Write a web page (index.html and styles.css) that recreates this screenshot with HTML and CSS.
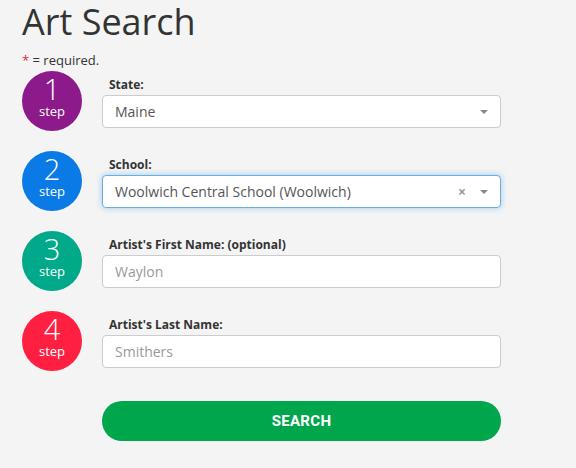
FILE: index.html
```html
<!DOCTYPE html>
<html lang="en">
<head>
<meta charset="utf-8">
<title>Art Search</title>
<link rel="stylesheet" href="styles.css">
</head>
<body>
<main class="page">
  <h1 class="title">Art Search</h1>
  <p class="note"><span class="req">*</span> = required.</p>
  <form class="steps">
    <div class="step-row">
      <div class="badge badge-1"><span class="num">1</span><span class="word">step</span></div>
      <div class="field">
        <label class="label">State:</label>
        <div class="select">
          <span class="value">Maine</span>
          <span class="arrow"></span>
        </div>
      </div>
    </div>
    <div class="step-row">
      <div class="badge badge-2"><span class="num">2</span><span class="word">step</span></div>
      <div class="field">
        <label class="label">School:</label>
        <div class="select focused">
          <span class="value">Woolwich Central School (Woolwich)</span>
          <span class="clear">×</span>
          <span class="arrow"></span>
        </div>
      </div>
    </div>
    <div class="step-row">
      <div class="badge badge-3"><span class="num">3</span><span class="word">step</span></div>
      <div class="field">
        <label class="label">Artist's First Name: (optional)</label>
        <input class="input" type="text" placeholder="Waylon">
      </div>
    </div>
    <div class="step-row">
      <div class="badge badge-4"><span class="num">4</span><span class="word">step</span></div>
      <div class="field">
        <label class="label">Artist's Last Name:</label>
        <input class="input" type="text" placeholder="Smithers">
      </div>
    </div>
    <div class="actions">
      <button class="search" type="button">SEARCH</button>
    </div>
  </form>
</main>
</body>
</html>
```
FILE: styles.css
```css
html, body {
  margin: 0;
  padding: 0;
  background: #f4f4f4;
}
body {
  font-family: "Open Sans", "Liberation Sans", sans-serif;
  color: #333;
}
.page {
  padding: 0 0 0 22px;
}
.title {
  margin: 0;
  font-size: 36px;
  font-weight: 400;
  line-height: 43px;
  color: #333;
}
.note {
  margin: 8px 0 0 0;
  font-size: 13px;
  line-height: 18px;
  color: #333;
}
.req {
  color: #e0262c;
}
.steps {
  display: flex;
  flex-direction: column;
  gap: 20px;
  margin-top: 2px;
}
.step-row {
  display: flex;
  align-items: flex-start;
  gap: 20px;
}
.badge {
  width: 60px;
  height: 60px;
  border-radius: 50%;
  flex: none;
  display: flex;
  flex-direction: column;
  align-items: center;
  color: #fff;
}
.badge-1 { background: #8d1a8b; }
.badge-2 { background: #0a7be6; }
.badge-3 { background: #00a98a; }
.badge-4 { background: #ff2041; }
.num {
  font-size: 29px;
  font-weight: 300;
  line-height: 26px;
  margin-top: 5px;
}
.word {
  font-size: 13px;
  line-height: 16px;
  margin-top: 1px;
}
.field {
  display: flex;
  flex-direction: column;
  width: 399px;
  padding-top: 5px;
}
.label {
  font-size: 12px;
  font-weight: 700;
  line-height: 17px;
  margin: 0 0 2px 7px;
  color: #333;
}
.select, .input {
  box-sizing: border-box;
  height: 33px;
  width: 399px;
  background: #fff;
  border: 1px solid #cccccc;
  border-radius: 4px;
  font-family: "Open Sans", "Liberation Sans", sans-serif;
  font-size: 14px;
  color: #555;
}
.select {
  display: flex;
  align-items: center;
  padding: 0 12px;
}
.select.focused {
  border-color: #66afe9;
  box-shadow: 0 0 6px rgba(102, 175, 233, 0.6);
}
.value {
  flex: 1;
}
.clear {
  color: #999;
  font-size: 14px;
  font-weight: 700;
  margin-right: 14px;
  line-height: 1;
}
.arrow {
  width: 0;
  height: 0;
  border-left: 4px solid transparent;
  border-right: 4px solid transparent;
  border-top: 4px solid #888;
}
.input {
  padding: 0 12px;
  outline: none;
}
.input::placeholder {
  color: #999;
}
.actions {
  padding-left: 80px;
  margin-top: 10px;
}
.search {
  width: 399px;
  height: 40px;
  border: none;
  border-radius: 20px;
  background: #00a64c;
  color: #fff;
  font-family: Roboto, "Liberation Sans", sans-serif;
  font-weight: 700;
  font-size: 15px;
  letter-spacing: 0.3px;
  cursor: pointer;
}
```
